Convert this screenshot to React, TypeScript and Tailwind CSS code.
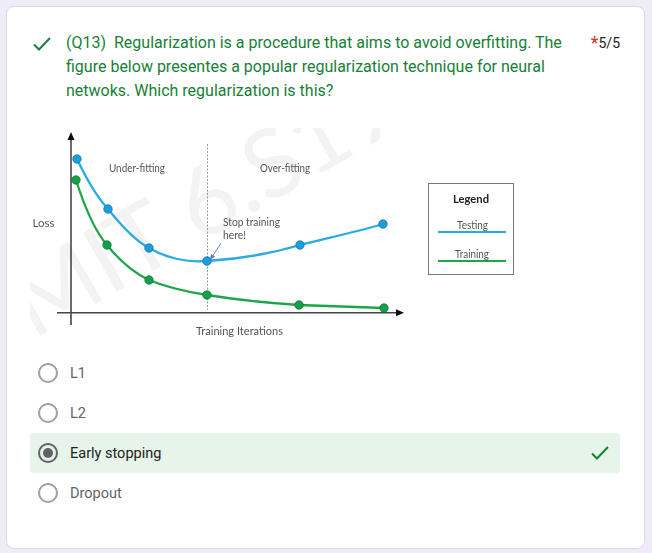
const options = [
  { label: "L1", selected: false },
  { label: "L2", selected: false },
  { label: "Early stopping", selected: true },
  { label: "Dropout", selected: false },
];

function Check({ className }: { className: string }) {
  return (
    <svg viewBox="0 0 18 14" fill="none" className={className}>
      <path d="M1 7.5 L6 12.5 L17 1" stroke="#188038" strokeWidth="2" />
    </svg>
  );
}

function Radio({ selected }: { selected: boolean }) {
  return (
    <div
      className={`flex h-5 w-5 shrink-0 items-center justify-center rounded-full border-2 ${
        selected ? "border-[#5f6368]" : "border-[#9aa0a6]"
      }`}
    >
      {selected && <div className="h-2.5 w-2.5 rounded-full bg-[#5f6368]" />}
    </div>
  );
}

const blue = [
  [77, 159],
  [108, 209],
  [149, 248],
  [207, 261],
  [300, 245],
  [383, 224],
];
const green = [
  [76, 180],
  [107, 245],
  [149, 280],
  [207, 295],
  [299, 305],
  [384, 308],
];

// label, x, baseline y, width in the picture
const labels: [string, number, number, number][] = [
  ["Loss", 32.5, 227, 22],
  ["Under-fitting", 109, 172, 56],
  ["Over-fitting", 260, 172, 50],
  ["Stop training", 223, 226, 57],
  ["here!", 223, 239, 23],
  ["Training Iterations", 196, 335, 87],
  ["Testing", 457, 229, 31],
  ["Training", 455, 258, 34],
];

function Figure() {
  const ox = 30;
  const oy = 128;
  return (
    <svg
      width="490"
      height="217"
      viewBox={`${ox} ${oy} 490 217`}
      className="block"
      fontFamily="Lato, sans-serif"
    >
      <defs>
        <filter id="soft" x="-5%" y="-5%" width="110%" height="110%">
          <feGaussianBlur stdDeviation="0.35" />
        </filter>
      </defs>
      <text
        x="33"
        y="340"
        fontSize="95"
        fill="#f3f3f3"
        transform="rotate(-30 33 340)"
      >
        MIT 6.S191
      </text>

      <g filter="url(#soft)">
        <path d="M71 325V139" stroke="#444" strokeWidth="1.6" />
        <path d="M71 132l-3.5 8h7z" fill="#111" />
        <path d="M57 312.7H397" stroke="#444" strokeWidth="1.6" />
        <path d="M404 312.7l-8-3.5v7z" fill="#111" />
        <path d="M207.5 144V310" stroke="#8a9bb0" strokeWidth="1" strokeDasharray="2 1.5" />

        <path
          d="M77 159C86 178 96 196 108 209C120 224 134 240 149 248C166 258 188 263 207 261C240 259 270 254 300 245C328 238 356 232 383 224"
          fill="none"
          stroke="#29abe2"
          strokeWidth="2.3"
        />
        <path
          d="M76 180C84 205 94 230 107 245C119 260 134 273 149 280C168 288 188 292 207 295C238 300 268 303 299 305C328 306 356 307 384 308"
          fill="none"
          stroke="#1fa64a"
          strokeWidth="2.3"
        />
        {blue.map(([x, y]) => (
          <circle key={x} cx={x} cy={y} r="4.2" fill="#14a0e0" stroke="#1d6f93" strokeWidth="0.8" />
        ))}
        {green.map(([x, y]) => (
          <circle key={x} cx={x} cy={y} r="4.2" fill="#10a34a" stroke="#1a6e3a" strokeWidth="0.8" />
        ))}
        <path d="M221 243L212 257" stroke="#6f8fcf" strokeWidth="1" />
        <path d="M210 260l1-6 4 2.5z" fill="#5b78c4" />

        <rect x="428.5" y="183.5" width="85" height="91" fill="#fff" stroke="#777" strokeWidth="1" />
        <path d="M438 232H506" stroke="#29abe2" strokeWidth="2" />
        <path d="M438 261H506" stroke="#1fa64a" strokeWidth="2" />

        <g fontSize="11.5" fill="#555">
          {labels.map(([text, x, y, w]) => (
            <text key={text} x={x} y={y} textLength={w} lengthAdjust="spacingAndGlyphs">
              {text}
            </text>
          ))}
          <text x="453" y="203" fontWeight="700" fill="#222" textLength={36} lengthAdjust="spacingAndGlyphs">
            Legend
          </text>
        </g>
      </g>
    </svg>
  );
}

export default function App() {
  return (
    <div className="h-[553px] w-[652px] overflow-hidden bg-[#f0ebf8] pl-1.5 pt-[6px] font-['Roboto',sans-serif]">
      <div className="h-[543px] w-[639px] rounded-lg border border-[#dadce0] bg-white pl-[23px] pr-6 pt-6">
        <div className="flex items-start pl-[3px]">
          <Check className="mt-[6px] h-[14px] w-[18px] shrink-0" />
          <div className="ml-[15px] w-[500px] text-base leading-6 text-[#188038]">
            (Q13)&nbsp; Regularization is a procedure that aims to avoid overfitting. The figure below presentes a popular regularization technique for neural netwoks. Which regularization is this?
          </div>
          <div className="ml-auto flex items-start pt-0.5 text-sm leading-5 text-[#202124]">
            <span className="text-lg leading-5 text-[#d93025]">*</span>
            <span>5/5</span>
          </div>
        </div>

        <div className="mt-[25px]">
          <Figure />
        </div>

        <div className="mt-2">
          {options.map((opt) => (
            <div
              key={opt.label}
              className={`flex h-10 items-center rounded pl-2 pr-[11px] text-[14.5px] ${
                opt.selected ? "bg-[#e6f4ea] text-[#202124]" : "text-[#5f6368]"
              }`}
            >
              <Radio selected={opt.selected} />
              <span className="ml-3 pt-[2px]">{opt.label}</span>
              {opt.selected && <Check className="ml-auto h-[14px] w-[18px]" />}
            </div>
          ))}
        </div>
      </div>
    </div>
  );
}
